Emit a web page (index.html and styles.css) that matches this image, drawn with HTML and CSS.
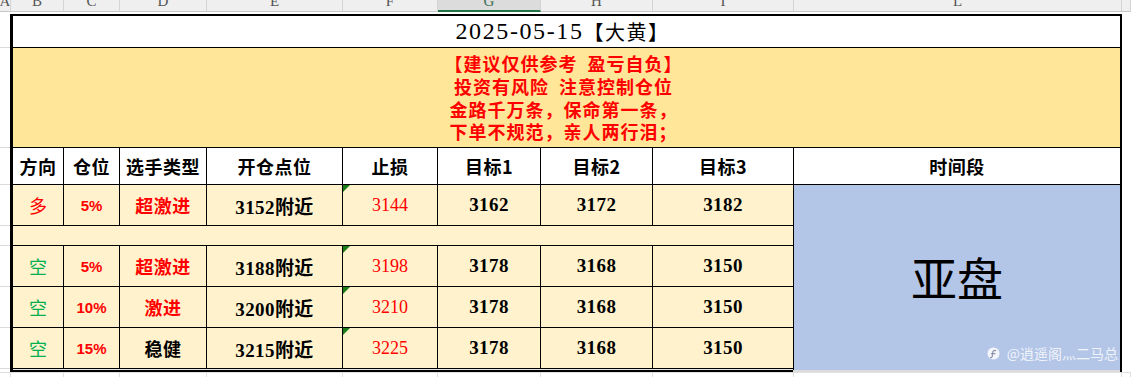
FILE: index.html
```html
<!DOCTYPE html>
<html lang="zh">
<head>
<meta charset="utf-8">
<title>2025-05-15 大黄</title>
<link rel="stylesheet" href="styles.css">
</head>
<body>
<div class="colbar">
  <div class="ch"><span>A</span></div>
  <div class="ch"><span>B</span></div>
  <div class="ch"><span>C</span></div>
  <div class="ch"><span>D</span></div>
  <div class="ch"><span>E</span></div>
  <div class="ch"><span>F</span></div>
  <div class="ch sel"><span>G</span></div>
  <div class="ch"><span>H</span></div>
  <div class="ch"><span>I</span></div>
  <div class="ch"><span>L</span></div>
  <div class="ch"></div>
</div>
<div class="sheet">
  <div class="rowhead">
    <div></div><div></div><div></div><div></div><div></div><div></div><div></div><div></div><div></div>
  </div>
  <div class="table">
    <div class="grid">
      <div class="cell title span8"><span class="date">2025-05-15</span><span class="name">【大黄】</span></div>
      <div class="cell notice span8">
        <p>【建议仅供参考&ensp;盈亏自负】</p>
        <p>投资有风险&ensp;注意控制仓位</p>
        <p>金路千万条，保命第一条，</p>
        <p>下单不规范，亲人两行泪；</p>
      </div>

      <div class="cell head">方向</div>
      <div class="cell head">仓位</div>
      <div class="cell head">选手类型</div>
      <div class="cell head">开仓点位</div>
      <div class="cell head">止损</div>
      <div class="cell head">目标1</div>
      <div class="cell head">目标2</div>
      <div class="cell head">目标3</div>
      <div class="cell head">时间段</div>

      <div class="cell d dir red">多</div>
      <div class="cell d pct">5%</div>
      <div class="cell d type red">超激进</div>
      <div class="cell d entry">3152附近</div>
      <div class="cell d stop flag">3144</div>
      <div class="cell d tgt">3162</div>
      <div class="cell d tgt">3172</div>
      <div class="cell d tgt">3182</div>
      <div class="cell session">
        <span class="big">亚盘</span>
        <div class="mark">
          <svg width="13" height="13" viewBox="0 0 13 13"><circle cx="6.5" cy="6.5" r="6" fill="#f4f6fb"/><path d="M8.6 3.6c-1.4-.5-2.6.2-2.8 1.6l-.6 4.3c-.2 1-.9 1.3-1.6 1" fill="none" stroke="#8a93a8" stroke-width="1.2" stroke-linecap="round"/><path d="M4.4 6.6h3.6" stroke="#8a93a8" stroke-width="1.1" stroke-linecap="round"/></svg>
          <span>@逍遥阁灬二马总</span>
        </div>
      </div>

      <div class="cell d blank span8b"></div>

      <div class="cell d dir green">空</div>
      <div class="cell d pct">5%</div>
      <div class="cell d type red">超激进</div>
      <div class="cell d entry">3188附近</div>
      <div class="cell d stop flag">3198</div>
      <div class="cell d tgt">3178</div>
      <div class="cell d tgt">3168</div>
      <div class="cell d tgt">3150</div>

      <div class="cell d dir green">空</div>
      <div class="cell d pct">10%</div>
      <div class="cell d type red">激进</div>
      <div class="cell d entry">3200附近</div>
      <div class="cell d stop flag">3210</div>
      <div class="cell d tgt">3178</div>
      <div class="cell d tgt">3168</div>
      <div class="cell d tgt">3150</div>

      <div class="cell d dir green">空</div>
      <div class="cell d pct">15%</div>
      <div class="cell d type">稳健</div>
      <div class="cell d entry">3215附近</div>
      <div class="cell d stop flag">3225</div>
      <div class="cell d tgt">3178</div>
      <div class="cell d tgt">3168</div>
      <div class="cell d tgt">3150</div>

      <div class="cell edge span8b"></div>
    </div>
    <div class="foot"><div class="foot-l"></div><div class="foot-r"></div></div>
  </div>
</div>
<div class="below">
  <div></div><div></div><div></div><div></div><div></div><div></div><div></div><div></div><div></div><div></div><div></div>
</div>
</body>
</html>
```

FILE: styles.css
```css
* { box-sizing: border-box; margin: 0; padding: 0; }

html, body {
  width: 1131px;
  height: 377px;
  overflow: hidden;
  background: #ffffff;
}

body {
  font-family: "Noto Sans CJK SC", sans-serif;
  color: #000;
}

/* spreadsheet column letters */
.colbar {
  display: grid;
  grid-template-columns: 11px 53px 56px 87px 136px 95px 103px 112px 141px 328px 1fr;
  height: 12px;
  background: #efefef;
}
.ch {
  border-right: 1px solid #d4d4d4;
  border-bottom: 1px solid #c8c8c8;
  display: flex;
  justify-content: center;
  align-items: flex-end;
  overflow: hidden;
}
.ch span {
  font-family: "Liberation Serif", serif;
  font-size: 15px;
  line-height: 1;
  color: #555;
  margin-bottom: 2px;
}
.ch.sel {
  background: #dcdcdc;
  border-bottom: 2px solid #217346;
}
.ch.sel span { margin-bottom: 1px; color: #3c6e50; }

/* sheet body */
.sheet {
  display: flex;
}
.rowhead {
  width: 10px;
  display: grid;
  grid-template-rows: 31px 99px 36px 40px 19px 40px 40px 40px 1fr;
  gap: 1px;
  background: #dadada;
  border-top: 4px solid #fff;
}
.rowhead div { background: #fff; }

.table {
  margin-top: 2px;
  width: 1112px;
  border-left: 3px solid #000;
  border-top: 2px solid #000;
  border-right: 2px solid #000;
}

.grid {
  display: grid;
  grid-template-columns: 50px 55px 86px 135px 94px 102px 111px 140px 326px;
  grid-template-rows: 31px 99px 36px 40px 19px 40px 40px 40px 1px;
  gap: 1px;
  background: #000;
}

.cell {
  display: flex;
  align-items: center;
  justify-content: center;
  background: #fff;
}

.span8 { grid-column: 1 / 10; }
.span8b { grid-column: 1 / 9; }

.title {
  font-family: "Liberation Serif", "Noto Sans CJK SC", serif;
  font-size: 24px;
  letter-spacing: 1.6px;
  padding-right: 8px;
}
.title .name {
  font-family: "Noto Sans CJK SC", sans-serif;
  font-size: 20px;
  letter-spacing: 1.5px;
}

.notice {
  background: #ffe699;
  flex-direction: column;
  color: #ff0000;
  font-weight: 700;
  font-size: 18px;
  letter-spacing: 1px;
  line-height: 22.7px;
  padding-right: 6px;
}

.head {
  font-size: 18px;
  font-weight: 700;
  letter-spacing: 0.5px;
}

.d {
  background: #fff2cc;
  position: relative;
}

.dir { font-size: 18px; }
.red { color: #ff0000; }
.green { color: #00b050; }

.pct {
  font-family: "Liberation Sans", sans-serif;
  font-weight: 700;
  font-size: 15px;
  color: #ff0000;
}

.type {
  font-size: 18px;
  font-weight: 700;
  letter-spacing: 0.5px;
}

.entry, .tgt {
  font-family: "Liberation Serif", "Noto Sans CJK SC", serif;
  font-weight: 700;
  font-size: 19px;
  letter-spacing: 0.4px;
}

.stop {
  font-family: "Liberation Serif", serif;
  font-size: 18px;
  color: #ff0000;
}

.flag::before {
  content: "";
  position: absolute;
  left: 0;
  top: 0;
  border-top: 7px solid #1a7f1a;
  border-right: 7px solid transparent;
}

.session {
  grid-column: 9;
  grid-row: 4 / 10;
  background: #b4c6e7;
  position: relative;
}
.big {
  font-size: 46px;
  line-height: 1;
  padding-bottom: 4px;
}
.mark {
  position: absolute;
  right: 2px;
  bottom: 10px;
  display: flex;
  align-items: center;
  gap: 7px;
  color: rgba(255, 255, 255, 0.82);
  font-size: 14px;
  line-height: 1;
}

.edge { background: #e6e6e6; }

.foot {
  display: flex;
  height: 2px;
}
.foot-l { width: 780px; background: #000; }
.foot-r { flex: 1; background: #dcdcdc; }

.below {
  display: grid;
  grid-template-columns: 11px 53px 56px 87px 136px 95px 103px 112px 141px 328px 1fr;
  height: 5px;
  border-top: 1px solid #e0e0e0;
}
.below div { border-right: 1px solid #e0e0e0; }
```
